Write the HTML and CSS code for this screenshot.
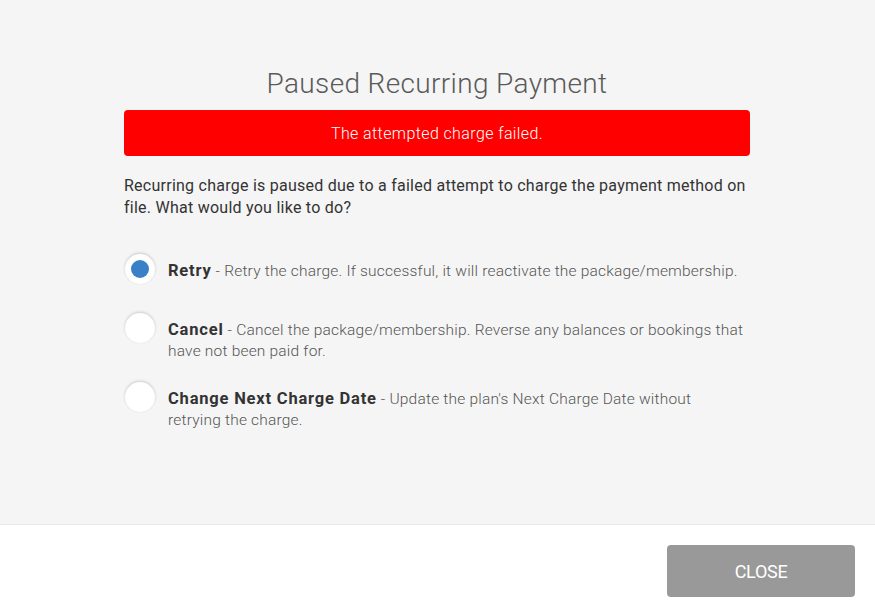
FILE: index.html
```html
<!DOCTYPE html>
<html>
<head>
<meta charset="utf-8">
<link rel="stylesheet" href="styles.css">
</head>
<body>
<div class="modal">
  <div class="body">
    <h1 class="title">Paused Recurring Payment</h1>
    <div class="alert">The attempted charge failed.</div>
    <p class="intro">Recurring charge is paused due to a failed attempt to charge the payment method on file. What would you like to do?</p>
    <div class="options">
      <label class="option">
        <span class="radio checked"><span class="dot"></span></span>
        <span class="text"><b>Retry</b> - Retry the charge. If successful, it will reactivate the package/membership.</span>
      </label>
      <label class="option">
        <span class="radio"></span>
        <span class="text"><b>Cancel</b> - Cancel the package/membership. Reverse any balances or bookings that have not been paid for.</span>
      </label>
      <label class="option">
        <span class="radio"></span>
        <span class="text"><b>Change Next Charge Date</b> - Update the plan's Next Charge Date without retrying the charge.</span>
      </label>
    </div>
  </div>
  <div class="footer">
    <button class="close">CLOSE</button>
  </div>
</div>
</body>
</html>
```
FILE: styles.css
```css
html, body {
  margin: 0;
  padding: 0;
}
body {
  font-family: Roboto, "Liberation Sans", sans-serif;
  background: #ffffff;
  width: 875px;
  height: 615px;
  overflow: hidden;
}
.modal {
  display: flex;
  flex-direction: column;
  height: 615px;
}
.body {
  background: #f5f5f5;
  height: 525px;
  box-sizing: border-box;
  padding: 64px 125px 0 124px;
  border-bottom: 1px solid #e9e9e9;
}
.title {
  margin: 0;
  text-align: center;
  font-weight: 300;
  font-size: 28px;
  line-height: 40px;
  color: #5a5a5a;
  letter-spacing: 0.35px;
}
.alert {
  margin-top: 6px;
  height: 46px;
  background: #ff0000;
  border-radius: 4px;
  color: #ffffff;
  font-size: 16px;
  font-weight: 300;
  display: flex;
  align-items: center;
  justify-content: center;
  letter-spacing: 0.4px;
}
.intro {
  margin: 19px 0 0 0;
  font-size: 16px;
  line-height: 22px;
  color: #333333;
  letter-spacing: 0.25px;
}
.options {
  margin-top: 34px;
  margin-right: 5px;
  display: flex;
  flex-direction: column;
  gap: 19px;
}
.option {
  display: flex;
  align-items: flex-start;
  gap: 13px;
  padding-left: 1px;
  min-height: 40px;
}
.radio {
  flex: none;
  width: 30px;
  height: 30px;
  border-radius: 50%;
  background: #ffffff;
  box-shadow: 0 -1px 3px rgba(0, 0, 0, 0.18);
  display: flex;
  align-items: center;
  justify-content: center;
  margin-top: 1px;
}
.dot {
  width: 18px;
  height: 18px;
  border-radius: 50%;
  background: #3a80c6;
}
.text {
  font-size: 15.5px;
  line-height: 21px;
  color: #555555;
  font-weight: 300;
  letter-spacing: 0.2px;
  padding-top: 7px;
}
.text b {
  font-size: 16.5px;
  font-weight: 700;
  color: #333333;
  letter-spacing: 0.8px;
}
.footer {
  flex: 1;
  background: #ffffff;
  display: flex;
  justify-content: flex-end;
  align-items: flex-start;
  padding: 20px 20px 0 0;
}
.close {
  width: 188px;
  height: 52px;
  border: none;
  border-radius: 4px;
  background: #999999;
  color: #ffffff;
  font-family: Roboto, "Liberation Sans", sans-serif;
  font-size: 18px;
  font-weight: 400;
  letter-spacing: -0.3px;
  cursor: pointer;
}
```
